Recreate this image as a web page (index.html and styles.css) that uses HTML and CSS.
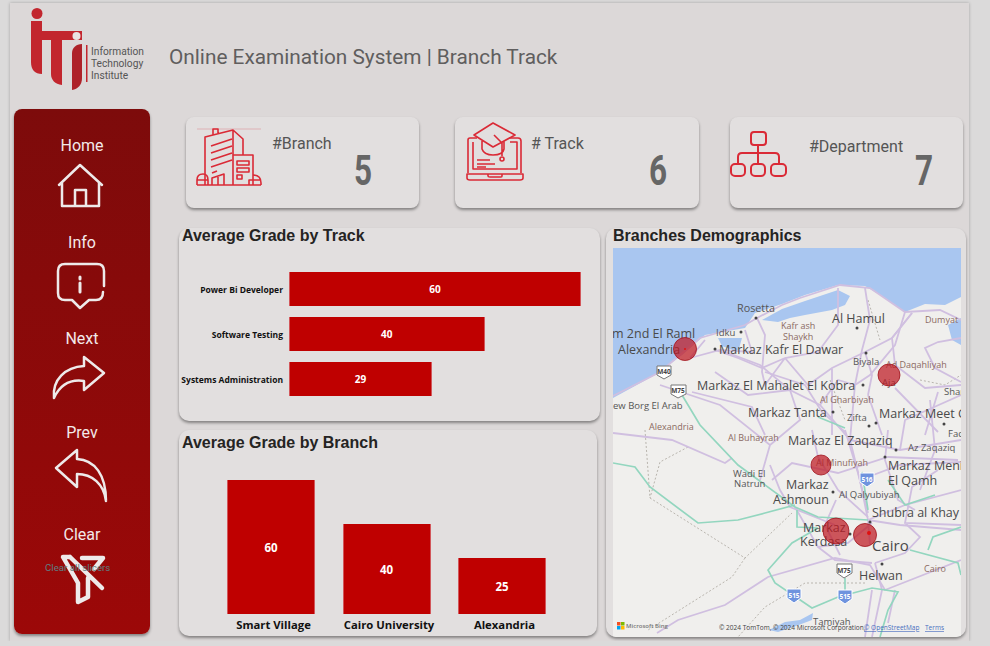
FILE: index.html
```html
<!DOCTYPE html>
<html lang="en">
<head>
    <meta charset="UTF-8">
    <meta name="viewport" content="width=device-width, initial-scale=1.0">
    <title>Branch Track</title>
    <link rel="stylesheet" href="styles.css">
</head>
<body>
    <div class="page">
        <header class="header">
            <svg class="logo" viewBox="30 3 116 106">
                <circle cx="37" cy="13.500" r="5.500" fill="#c2262e"/>
                <path d="M31 21H42V31H72V40H62V85C55 84 51 80 51 74V40H42V74C35 74 31 70 31 62Z" fill="#c2262e"/>
                <path d="M72 31H82V40H72Z" fill="#c2262e"/>
                <path d="M82 44V78C82 85 78 89 72 90V53C72 48 76 44 82 44Z" fill="#ae2229"/>
                <circle cx="76.500" cy="36" r="4" fill="#e9e4e4"/>
                <rect x="86" y="45" width="1.500" height="37" fill="#c2262e"/>
                <text class="logo-text" x="91" y="55">Information</text>
                <text class="logo-text" x="91" y="67">Technology</text>
                <text class="logo-text" x="91" y="79">Institute</text>
            </svg>
            <h1 class="title">Online Examination System | Branch Track</h1>
        </header>

        <div class="content">
            <nav class="sidebar">
                <div class="nav-item">
                    <span class="nav-label">Home</span>
                    <svg class="nav-icon" viewBox="14 157 136 72">
                        <path d="M59 185 80 165 102 185M62 183V206H99V183M75 206V190H86V206"/>
                    </svg>
                </div>
                <div class="nav-item">
                    <span class="nav-label">Info</span>
                    <svg class="nav-icon" viewBox="14 254 136 72">
                        <path d="M72 300H65Q58 300 58 293V271Q58 264 65 264H97Q104 264 104 271V286M103 292Q103 300 96 300H89L80 308 72 300"/>
                        <path class="icon-heavy" d="M80 283V292M80 277V279"/>
                    </svg>
                </div>
                <div class="nav-item">
                    <span class="nav-label">Next</span>
                    <svg class="nav-icon" viewBox="14 350 136 72">
                        <path d="M54 398C52 380 65 367 84 366V357L104 373 84 390V381C70 379 60 385 54 398Z"/>
                    </svg>
                </div>
                <div class="nav-item">
                    <span class="nav-label">Prev</span>
                    <svg class="nav-icon" viewBox="14 444 136 72">
                        <path d="M77 450 56 468 77 487V474C92 474 104 484 106 501 106 475 95 460 77 459Z"/>
                    </svg>
                </div>
                <div class="nav-item">
                    <span class="nav-label">Clear</span>
                    <svg class="nav-icon nav-icon-bold" viewBox="14 546 136 72">
                        <path d="M70 557H63L78 583V602L88 597V578M82 558H103L94 569M70 557 102 588"/>
                    </svg>
                    <span class="tooltip">Clear all slicers</span>
                </div>
            </nav>

            <main class="main">
                <section class="kpi-row">
                    <div class="kpi kpi-branch">
                        <svg class="kpi-icon" width="80" height="91" viewBox="186 117 80 91">
                            <path class="icon-faint" d="M197 129H261"/>
                            <path d="M205 185V137L233 130 243 139V155M213 135V129H218V133M233 130V155"/>
                            <path d="M211 146 232 139M211 153 232 146M211 160 232 153M211 167 232 160M212 173 217 171"/>
                            <path d="M233 155H253V185M233 185V155M237 161H249V165H237ZM237 168H249V172H237ZM237 175H242V179H237Z"/>
                            <path d="M197 185V180Q197 174 203 174 208 174 208 180V185M197 180H208M212 185V178L224 174V185M218 176V185M253 175Q261 175 261 183V185M249 185V180H261M197 185H261"/>
                        </svg>
                        <div class="kpi-body">
                            <div class="kpi-label">#Branch</div>
                            <div class="kpi-value">5</div>
                        </div>
                    </div>
                    <div class="kpi kpi-track">
                        <svg class="kpi-icon" width="72" height="91" viewBox="455 117 72 91">
                            <path d="M477 138H470Q468 138 468 140V173M509 138H518Q521 138 521 141V173M473 142V169H517V142H510M467 174H523V178Q523 180 520 180H470Q467 180 467 178ZM488 174V176Q488 177 490 177H501Q502 177 502 176V174"/>
                            <path d="M493 123 515 135 493 147 474 135ZM482 141V149Q484 155 493 155 503 155 504 149V141M494 135 502 143V156"/>
                            <circle cx="502" cy="159" r="2"/>
                            <path d="M477 160H490M477 164H495M477 167H486"/>
                        </svg>
                        <div class="kpi-body">
                            <div class="kpi-label">
                                # Track
                            </div>
                            <div class="kpi-value">6</div>
                        </div>
                    </div>
                    <div class="kpi kpi-dept">
                        <svg class="kpi-icon" width="70" height="91" viewBox="730 117 70 91">
                            <rect x="751" y="132" width="15" height="13" rx="3"/>
                            <rect x="731" y="164" width="14" height="12" rx="4"/>
                            <rect x="751" y="164" width="14" height="12" rx="4"/>
                            <rect x="771" y="164" width="15" height="12" rx="4"/>
                            <path d="M758 145V164M738 164V157Q738 153 742 153H775Q779 153 779 157V164"/>
                        </svg>
                        <div class="kpi-body">
                            <div class="kpi-label">#Department</div>
                            <div class="kpi-value">7</div>
                        </div>
                    </div>
                </section>

                <section class="charts">
                    <div class="left-col">
                        <div class="card card-track">
                            <h2 class="card-title">Average Grade by Track</h2>
                            <div class="hbars">
                                <div class="hbar-row">
                                    <span class="hbar-label">Power Bi Developer</span>
                                    <div class="hbar-track"><div class="bar" style="width: 100%">60</div></div>
                                </div>
                                <div class="hbar-row">
                                    <span class="hbar-label">Software Testing</span>
                                    <div class="hbar-track"><div class="bar" style="width: 67%">40</div></div>
                                </div>
                                <div class="hbar-row">
                                    <span class="hbar-label">Systems Administration</span>
                                    <div class="hbar-track"><div class="bar" style="width: 49%">29</div></div>
                                </div>
                            </div>
                        </div>
                        <div class="card card-branch">
                            <h2 class="card-title">Average Grade by Branch</h2>
                            <div class="vbars">
                                <div class="vbar-col">
                                    <div class="bar bar-v" style="height: 134px">60</div>
                                    <span class="vbar-label">Smart Village</span>
                                </div>
                                <div class="vbar-col">
                                    <div class="bar bar-v" style="height: 90px">40</div>
                                    <span class="vbar-label">Cairo University</span>
                                </div>
                                <div class="vbar-col">
                                    <div class="bar bar-v" style="height: 56px">25</div>
                                    <span class="vbar-label">Alexandria</span>
                                </div>
                            </div>
                        </div>
                    </div>

                    <div class="card card-map">
                        <h2 class="card-title">Branches Demographics</h2>
                        <svg class="map" viewBox="613 248 348 389">
                            <rect class="land" x="613" y="248" width="348" height="389"/>
                            <path class="sea" d="M613 248H961V297L945 305 925 304 905 312 885 298 865 286 838 285 805 295 782 304 755 313 745 328 705 335 682 355 655 375 613 398Z"/>
                            <path class="sea" d="M762 320 782 309 805 301 838 290 850 296 845 305 832 310 805 315 790 318 778 322Z"/>
                            <path class="sea" d="M718 338H742L738 352 722 346ZM948 325 961 318V345L952 340Z"/>
                            <path class="sea" d="M769 630 785 622 800 620 813 613 812 620 796 626 778 632Z"/>

                            <g class="border">
                                <path d="M645 430 650 498 745 558 792 513"/>
                                <path d="M688 447 660 462 650 498M745 558 732 577 648 630"/>
                                <path d="M865 583H805L765 607 738 637"/>
                                <path d="M868 300 880 340M920 380 945 385 961 375M830 380 845 420"/>
                            </g>

                            <g class="road">
                                <path d="M613 396 660 372 700 338 745 325 757 318 782 305 800 298 840 285 870 288 905 312 940 310 961 320"/>
                                <path d="M690 358 720 350 760 365 790 390 820 405 850 440 860 480 868 520 870 545"/>
                                <path d="M690 358 705 340M745 330 752 352 720 350"/>
                                <path d="M757 318 765 335 762 372 765 385 785 358M715 350 738 358 762 368 785 358 818 352 838 325 838 288"/>
                                <path d="M785 358 808 385 832 368 865 352 892 338 912 313M832 368V435M865 352 872 375 868 395"/>
                                <path d="M912 313 892 338 895 365 925 388 961 385M961 338 938 342 925 348 935 368 961 382"/>
                                <path d="M765 372 805 385 822 412 845 432M692 392 752 407 765 435M868 395 882 435M895 388 938 432M938 392 925 435"/>
                                <path d="M865 288 870 320 862 350 855 385 850 440M905 312 895 345 870 375 855 385"/>
                                <path d="M790 390 800 420 770 445 760 480M820 405 838 380 855 385M660 385 720 405 770 445M715 372 748 395 790 390"/>
                                <path d="M772 480 792 463 838 473 888 457 958 460M812 430 818 457 838 490 868 517M845 430 858 473 868 513"/>
                                <path d="M888 430 885 460 898 500 915 510M938 470 912 487 905 523 961 525M905 523 920 537 905 553 875 563"/>
                                <path d="M850 440 900 450 961 440M860 480 900 465 961 462M770 465 780 490 790 507 835 525"/>
                                <path d="M795 507 818 547 848 543 872 523M818 547 835 560 872 563M875 563 882 590 872 637M872 590 865 637M895 590 888 623"/>
                                <path d="M613 433 672 440 725 463 732 458M657 633 678 620 725 605 768 577 835 558 870 565 885 590 961 560"/>
                                <path d="M868 520 900 525 961 530M868 520 905 505 961 490M836 500 825 525 840 555M930 400 935 450 920 490M961 395 905 420 900 450"/>
                            </g>

                            <g class="highway">
                                <path d="M682 395 700 425 738 465 795 507 818 517 868 520"/>
                                <path d="M613 463 635 467 650 487 698 523 738 520 765 513 795 505"/>
                                <path d="M797 510 797 527 818 528M818 528 792 543 768 570 775 583 812 608 838 597 872 588 898 592 888 610 880 637"/>
                                <path d="M910 550 958 563 961 575M961 527 933 537 928 550M862 472 868 510M818 417 845 428M845 590V578"/>
                                <path d="M888 480 905 505 935 495"/>
                            </g>

                            <g class="shield-white">
                                <path d="M657 366H671V375L664 379 657 375Z"/>
                                <path d="M671 385H686V394L678 398 671 394Z"/>
                                <path d="M837 564H852V573L844 578 837 573Z"/>
                            </g>
                            <g class="shield-blue">
                                <path d="M860 473H874V482L867 487 860 482Z"/>
                                <path d="M787 589H801V598L794 603 787 598Z"/>
                                <path d="M838 590H852V599L845 604 838 599Z"/>
                            </g>
                            <text class="shield-text" x="664" y="374">M40</text>
                            <text class="shield-text" x="678" y="393">M75</text>
                            <text class="shield-text" x="844" y="573">M75</text>
                            <text class="shield-text shield-light" x="867" y="482">516</text>
                            <text class="shield-text shield-light" x="794" y="598">515</text>
                            <text class="shield-text shield-light" x="845" y="599">515</text>

                            <g class="place-dot">
                                <circle cx="756" cy="318" r="1.500"/>
                                <circle cx="741" cy="332" r="1.500"/>
                                <circle cx="715" cy="349" r="1.500"/>
                                <circle cx="857" cy="328" r="1.500"/>
                                <circle cx="866" cy="353" r="1.500"/>
                                <circle cx="863" cy="385" r="1.500"/>
                                <circle cx="833" cy="412" r="1.500"/>
                                <circle cx="869" cy="426" r="1.500"/>
                                <circle cx="876" cy="423" r="1.500"/>
                                <circle cx="944" cy="424" r="1.500"/>
                                <circle cx="896" cy="450" r="1.500"/>
                                <circle cx="885" cy="457" r="1.500"/>
                                <circle cx="833" cy="492" r="1.500"/>
                                <circle cx="870" cy="522" r="1.500"/>
                                <circle cx="850" cy="534" r="1.500"/>
                                <circle cx="882" cy="564" r="1.500"/>
                            </g>

                            <g class="place-lg">
                                <text x="612" y="338">m 2nd El Raml</text>
                                <text x="618" y="354">Alexandria</text>
                                <text x="719" y="354">Markaz Kafr El Dawar</text>
                                <text x="697" y="390">Markaz El Mahalet El Kobra</text>
                                <text x="748" y="417">Markaz Tanta</text>
                                <text x="879" y="418">Markaz Meet G</text>
                                <text x="832" y="323">Al Hamul</text>
                                <text x="788" y="445">Markaz El Zaqaziq</text>
                                <text x="888" y="470">Markaz Meni</text>
                                <text x="888" y="485">El Qamh</text>
                                <text x="786" y="489">Markaz</text>
                                <text x="773" y="504">Ashmoun</text>
                                <text x="872" y="517">Shubra al Khay</text>
                                <text x="803" y="532">Markaz</text>
                                <text x="800" y="546">Kerdasa</text>
                                <text x="859" y="580">Helwan</text>
                            </g>
                            <text class="place-xl" x="872" y="551">Cairo</text>
                            <g class="place-sm">
                                <text class="place-rosetta" x="737" y="312">Rosetta</text>
                                <text x="716" y="336">Idku</text>
                                <text x="853" y="365">Biyala</text>
                                <text x="882" y="386">Aja</text>
                                <text x="847" y="421">Zifta</text>
                                <text x="613" y="409">ew Borg El Arab</text>
                                <text x="733" y="477">Wadi El</text>
                                <text x="734" y="487">Natrun</text>
                                <text x="839" y="498">Al Qalyubiyah</text>
                                <text x="908" y="451">Az Zaqaziq</text>
                                <text x="813" y="625">Tamiyah</text>
                                <text x="948" y="437">Fac</text>
                                <text x="944" y="395">Shar</text>
                            </g>
                            <g class="place-region">
                                <text x="781" y="329">Kafr ash</text>
                                <text x="783" y="340">Shaykh</text>
                                <text x="886" y="368">Ad Daqahliyah</text>
                                <text x="925" y="323">Dumyat</text>
                                <text x="820" y="403">Al Gharbiyah</text>
                                <text x="649" y="430">Alexandria</text>
                                <text x="728" y="441">Al Buhayrah</text>
                                <text x="816" y="466">Al Minufiyah</text>
                                <text x="924" y="572">Cairo</text>
                            </g>

                            <g class="bubble">
                                <circle cx="685" cy="349" r="11.500"/>
                                <circle cx="889" cy="375" r="11"/>
                                <circle cx="821" cy="465" r="10"/>
                                <circle cx="836" cy="531" r="13"/>
                                <circle cx="865" cy="535" r="11.500"/>
                            </g>
                            <circle class="bubble-dot" cx="685" cy="349" r="1"/>
                            <circle class="bubble-dot" cx="869" cy="533" r="2"/>

                            <rect x="617" y="622" width="3.500" height="3.500" fill="#f25022"/>
                            <rect x="621" y="622" width="3.500" height="3.500" fill="#7fba00"/>
                            <rect x="617" y="626" width="3.500" height="3.500" fill="#00a4ef"/>
                            <rect x="621" y="626" width="3.500" height="3.500" fill="#ffb900"/>
                            <text class="bing" x="626" y="628">Microsoft Bing</text>
                            <text class="attrib" x="719" y="630">© 2024 TomTom, © 2024 Microsoft Corporation,</text>
                            <text class="attrib attrib-link" x="864" y="630">© OpenStreetMap</text>
                            <text class="attrib attrib-link" x="925" y="630">Terms</text>
                        </svg>
                    </div>
                </section>
            </main>
        </div>
    </div>
</body>
</html>
```

FILE: styles.css
```css
body {
    margin: 0;
    background-color: #dbdada;
    font-family: Roboto, Arial, sans-serif;
    overflow: hidden;
}
.page {
    width: 959px;
    height: 638px;
    margin: 3px 0 0 10px;
    background-color: #dcd8d8;
    box-shadow: 0 0 3px rgba(0, 0, 0, 0.25);
}
.header {
    display: flex;
    align-items: center;
    height: 106px;
}
.logo {
    width: 116px;
    height: 106px;
    margin: 0 23px 0 20px;
    flex-shrink: 0;
}
.logo-text {
    font-family: Roboto, sans-serif;
    font-size: 10.200px;
    fill: #555;
}
.title {
    margin: 0;
    padding-top: 2px;
    font-size: 20.800px;
    font-weight: 400;
    color: #605e5e;
}
.content {
    display: flex;
    padding-left: 4px;
}

/* left nav */
.sidebar {
    display: grid;
    grid-template-rows: 97px 96px 94px 102px 90px;
    width: 136px;
    height: 525px;
    box-sizing: border-box;
    padding-top: 25px;
    border-radius: 8px;
    background: linear-gradient(180deg, #7d0b0b, #9c0808);
    box-shadow: 0 2px 3px rgba(0, 0, 0, 0.4);
    flex-shrink: 0;
}
.nav-item {
    position: relative;
    text-align: center;
}
.nav-label {
    display: block;
    height: 23px;
    line-height: 24px;
    font-size: 16px;
    color: #f3e9e9;
}
.nav-icon {
    display: block;
    width: 136px;
    height: 72px;
    fill: none;
    stroke: #eeeaea;
    stroke-width: 2.500;
    stroke-linejoin: round;
    stroke-linecap: round;
}
.nav-icon-bold {
    stroke-width: 4.500;
}
.icon-heavy {
    stroke-width: 3;
}
.tooltip {
    position: absolute;
    left: 31px;
    top: 39px;
    font-size: 9.700px;
    color: #5f7f82;
    white-space: nowrap;
}

/* main area */
.main {
    padding: 8px 0 0 29px;
}
.kpi-row {
    display: flex;
    padding-left: 7px;
    margin-bottom: 20px;
}
.kpi {
    display: flex;
    width: 233px;
    height: 91px;
    border-radius: 8px;
    background-color: #e2dfdf;
    box-shadow: 0 2px 3px rgba(0, 0, 0, 0.4);
}
.kpi-track {
    width: 244px;
    margin: 0 31px 0 36px;
}
.kpi-icon {
    flex-shrink: 0;
    fill: none;
    stroke: #da2a36;
    stroke-width: 1.600;
    stroke-linejoin: round;
}
.kpi-dept .kpi-icon {
    stroke-width: 2;
}
.icon-faint {
    opacity: 0.25;
    stroke-width: 1;
}
.kpi-body {
    flex: 1;
    padding-top: 17px;
    padding-left: 6px;
    padding-right: 47px;
}
.kpi-track .kpi-body {
    padding-left: 4px;
    padding-right: 32px;
}
.kpi-dept .kpi-body {
    padding-top: 20px;
    padding-left: 9px;
    padding-right: 30px;
}
.kpi-label {
    height: 20px;
    line-height: 20px;
    font-size: 16px;
    color: #555;
}
.kpi-value {
    width: max-content;
    height: 33px;
    line-height: 33px;
    margin-left: auto;
    font-size: 42px;
    font-weight: 700;
    color: #666;
    transform: scaleX(0.75);
    transform-origin: right;
}
.kpi-dept .kpi-value {
    margin-top: -3px;
}
.charts {
    display: flex;
    gap: 6px;
}
.left-col {
    display: flex;
    flex-direction: column;
    gap: 9px;
    width: 421px;
}
.card {
    box-sizing: border-box;
    border-radius: 10px;
    background-color: #e2dfdf;
    box-shadow: 0 2px 3px rgba(0, 0, 0, 0.4);
}
.card-title {
    margin: 0;
    height: 15px;
    line-height: 15px;
    padding-left: 3px;
    font-family: "Liberation Sans", Arial, sans-serif;
    font-size: 16px;
    font-weight: 700;
    color: #252423;
}
.card-track {
    height: 193px;
}
.card-branch {
    width: 418px;
    height: 206px;
    padding-top: 5px;
}
.card-map {
    width: 360px;
    height: 409px;
    overflow: hidden;
    padding-left: 7px;
}
.card-map .card-title {
    height: 20px;
    line-height: 15px;
    padding-left: 0;
}

/* bars */
.bar {
    display: flex;
    align-items: center;
    justify-content: center;
    box-sizing: border-box;
    border: 1px solid #d2565a;
    border-width: 0 1px 0 1px;
    background-color: #bf0000;
    font-family: "Open Sans", sans-serif;
    font-weight: 700;
    color: #fff;
}
.hbars {
    display: flex;
    flex-direction: column;
    gap: 11px;
    padding-top: 29px;
}
.hbar-row {
    display: grid;
    grid-template-columns: 104px 292px;
    column-gap: 6px;
    align-items: center;
}
.hbar-label {
    font-family: "Open Sans", sans-serif;
    font-size: 8.500px;
    font-weight: 700;
    text-align: right;
    white-space: nowrap;
    color: #111;
}
.hbar-track .bar {
    height: 34px;
    font-size: 10px;
}
.vbars {
    display: flex;
    align-items: flex-end;
    gap: 27.500px;
    height: 186px;
    padding-left: 48px;
}
.vbar-col {
    display: flex;
    flex-direction: column;
    align-items: center;
    width: 88px;
}
.bar-v {
    width: 88px;
    font-size: 11.500px;
}
.vbar-label {
    height: 22px;
    line-height: 22px;
    padding-left: 5px;
    font-family: "Open Sans", sans-serif;
    font-size: 11.300px;
    font-weight: 700;
    white-space: nowrap;
    color: #111;
}

/* map */
.map {
    display: block;
    width: 348px;
    height: 389px;
}
.land {
    fill: #f0efed;
}
.sea {
    fill: #a9c6f0;
}
.border path {
    fill: none;
    stroke: #b9b5ae;
    stroke-width: 1;
    stroke-dasharray: 2 2;
}
.road path {
    fill: none;
    stroke: #d0bfe0;
    stroke-width: 1.800;
}
.highway path {
    fill: none;
    stroke: #93d6bf;
    stroke-width: 1.700;
}
.shield-white path {
    fill: #fff;
    stroke: #777;
    stroke-width: 1;
}
.shield-blue path {
    fill: #6f93de;
    stroke: #fff;
    stroke-width: 1;
}
.shield-text {
    font-family: "Open Sans", sans-serif;
    font-size: 6.500px;
    font-weight: 700;
    text-anchor: middle;
    fill: #444;
}
.shield-light {
    fill: #fff;
}
.place-dot circle {
    fill: #444;
}
.place-lg text {
    font-family: "Open Sans", sans-serif;
    font-size: 12.500px;
    fill: #4a4a4a;
}
.place-xl {
    font-family: "Open Sans", sans-serif;
    font-size: 15px;
    fill: #4a4a4a;
}
.place-sm text {
    font-family: "Open Sans", sans-serif;
    font-size: 9.500px;
    fill: #555;
}
.place-sm .place-rosetta {
    font-size: 10.800px;
}
.place-region text {
    font-family: "Open Sans", sans-serif;
    font-size: 9px;
    fill: #8b6a62;
}
.bubble circle {
    fill: rgba(190, 25, 35, 0.72);
    stroke: rgba(160, 20, 30, 0.8);
    stroke-width: 1;
}
.bubble-dot {
    fill: #e01010;
}
.bing {
    font-family: "Open Sans", sans-serif;
    font-size: 6px;
    font-weight: 600;
    fill: #777;
}
.attrib {
    font-family: "Open Sans", sans-serif;
    font-size: 6.500px;
    fill: #444;
}
.attrib-link {
    fill: #4a6fc0;
    text-decoration: underline;
}
```
